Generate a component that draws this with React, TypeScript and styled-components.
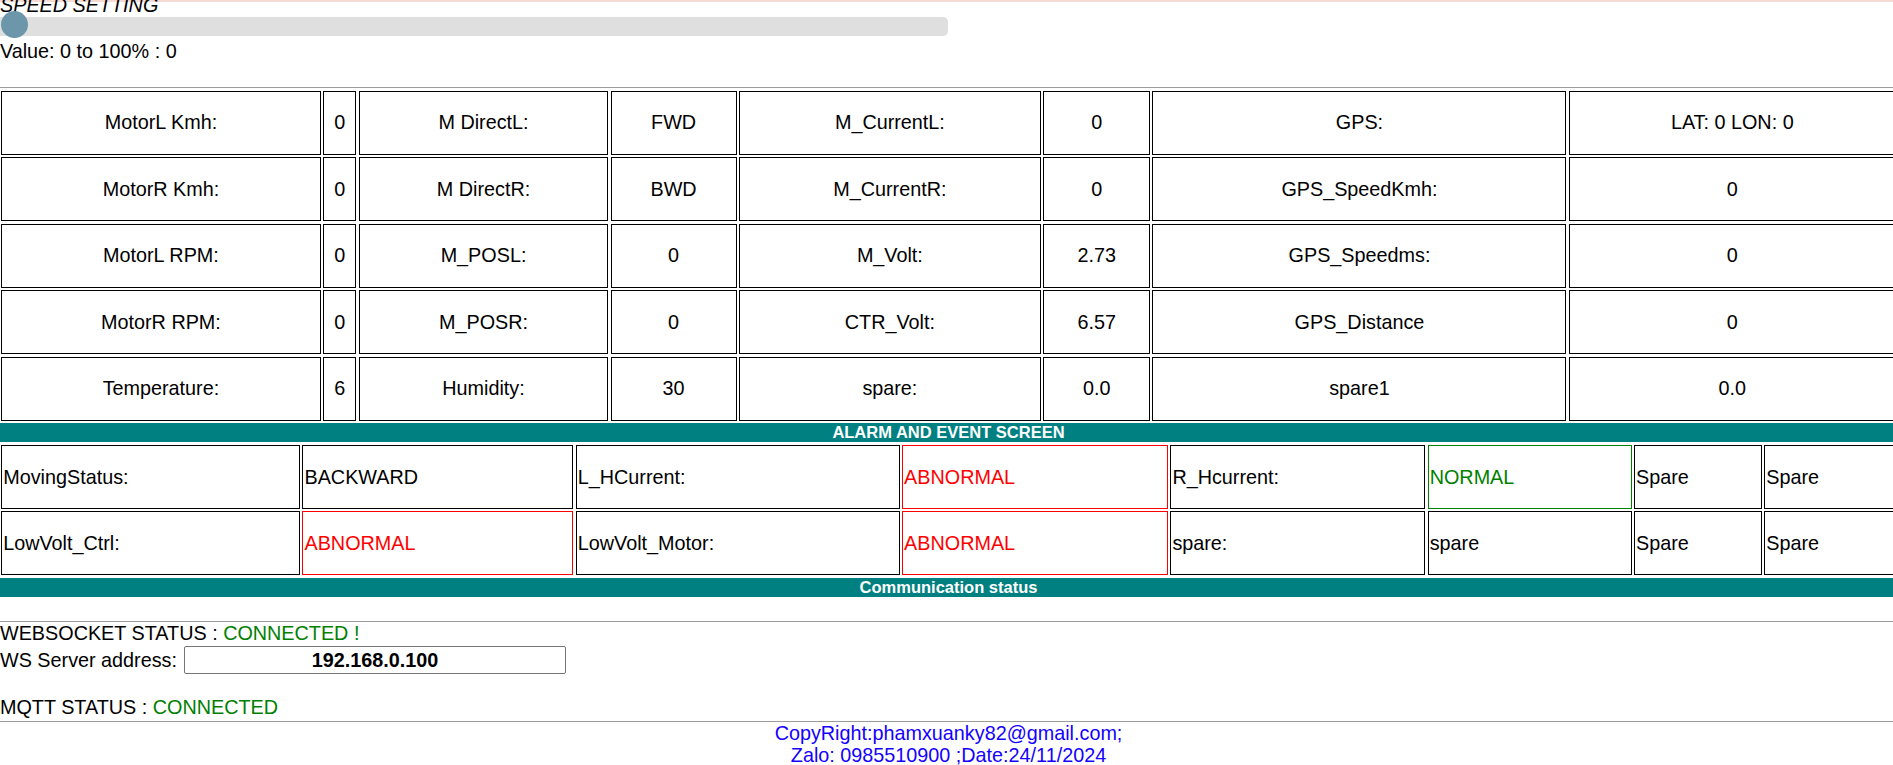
import styled, { createGlobalStyle } from 'styled-components'

const GlobalStyle = createGlobalStyle`
    html, body {
        margin: 0;
        padding: 0;
        overflow: hidden;
        background: #fff;
    }
    body {
        font-family: 'Liberation Sans', Arial, sans-serif;
        font-size: 19.8px;
        line-height: 22.6px;
        color: #000;
    }
`

const Page = styled.div`
    width: 1905px;
    border-top: 2px solid #f4dbd4;
`

const Heading = styled.div`
    margin-top: -8.5px;
    font-style: italic;
    height: 22.6px;
`

const SliderTrack = styled.div`
    position: relative;
    margin-top: 0.6px;
    width: 948px;
    height: 19px;
    background: #dfdfdf;
    border-radius: 0 5px 5px 0;
`

const SliderThumb = styled.div`
    position: absolute;
    left: 0.5px;
    top: -5.5px;
    width: 27px;
    height: 27px;
    border-radius: 50%;
    background: #6c96aa;
`

const ValueLine = styled.div`
    margin-top: 4.4px;
`

const Rule = styled.div<{ $gap: number }>`
    margin-top: ${(p) => p.$gap}px;
    height: 0;
    border-top: 1px solid #9c9c9c;
`

const DataGrid = styled.div<{ $cols: string }>`
    display: grid;
    grid-template-columns: ${(p) => p.$cols};
    grid-auto-rows: 64px;
    column-gap: 2.3px;
    row-gap: 2.5px;
    padding: 2.4px 0 2.4px 1.2px;
`

const DataCell = styled.div<{ $center?: boolean; $tone?: 'bad' | 'good' }>`
    box-sizing: border-box;
    border: 1px solid
        ${(p) =>
            p.$tone === 'bad' ? '#ff0000' : p.$tone === 'good' ? '#008000' : '#000'};
    color: ${(p) =>
        p.$tone === 'bad' ? '#ff0000' : p.$tone === 'good' ? '#008000' : '#000'};
    display: flex;
    align-items: center;
    justify-content: ${(p) => (p.$center ? 'center' : 'flex-start')};
    padding: 0 1px;
    white-space: nowrap;
    overflow: hidden;
`

const Banner = styled.div`
    width: 1897px;
    height: 19.4px;
    line-height: 19.4px;
    background: #008080;
    color: #fff;
    font-weight: bold;
    font-size: 16.5px;
    text-align: center;
`

const StatusLine = styled.div<{ $gap?: number }>`
    margin-top: ${(p) => p.$gap ?? 0}px;
`

const Ok = styled.span`
    color: #008000;
`

const AddressRow = styled.div`
    display: flex;
    align-items: center;
    gap: 7px;
    margin-top: 2.1px;
    height: 27.6px;
`

const AddressInput = styled.input`
    box-sizing: border-box;
    width: 382px;
    height: 27.6px;
    border: 1px solid #767676;
    border-radius: 2px;
    padding: 0;
    text-align: center;
    font-family: 'Liberation Sans', Arial, sans-serif;
    font-weight: bold;
    font-size: 19.8px;
    color: #000;
    background: #fff;
`

const Footer = styled.div`
    width: 1897px;
    color: #1400ff;
    text-align: center;
`

const motorRows = [
    ['MotorL Kmh:', '0', 'M DirectL:', 'FWD', 'M_CurrentL:', '0', 'GPS:', 'LAT: 0 LON: 0'],
    ['MotorR Kmh:', '0', 'M DirectR:', 'BWD', 'M_CurrentR:', '0', 'GPS_SpeedKmh:', '0'],
    ['MotorL RPM:', '0', 'M_POSL:', '0', 'M_Volt:', '2.73', 'GPS_Speedms:', '0'],
    ['MotorR RPM:', '0', 'M_POSR:', '0', 'CTR_Volt:', '6.57', 'GPS_Distance', '0'],
    ['Temperature:', '6', 'Humidity:', '30', 'spare:', '0.0', 'spare1', '0.0'],
]

type Alarm = { text: string; tone?: 'bad' | 'good' }

const alarmRows: Alarm[][] = [
    [
        { text: 'MovingStatus:' },
        { text: 'BACKWARD' },
        { text: 'L_HCurrent:' },
        { text: 'ABNORMAL', tone: 'bad' },
        { text: 'R_Hcurrent:' },
        { text: 'NORMAL', tone: 'good' },
        { text: 'Spare' },
        { text: 'Spare' },
    ],
    [
        { text: 'LowVolt_Ctrl:' },
        { text: 'ABNORMAL', tone: 'bad' },
        { text: 'LowVolt_Motor:' },
        { text: 'ABNORMAL', tone: 'bad' },
        { text: 'spare:' },
        { text: 'spare' },
        { text: 'Spare' },
        { text: 'Spare' },
    ],
]

function App() {
    return (
        <Page>
            <GlobalStyle />
            <Heading>SPEED SETTING</Heading>
            <SliderTrack>
                <SliderThumb />
            </SliderTrack>
            <ValueLine>Value: 0 to 100% : 0</ValueLine>
            <Rule $gap={24.6} />
            <DataGrid $cols="319.5px 33.5px 249.5px 126px 302px 107px 414px 327px">
                {motorRows.map((row, r) =>
                    row.map((text, c) => (
                        <DataCell key={`${r}-${c}`} $center>
                            {text}
                        </DataCell>
                    ))
                )}
            </DataGrid>
            <Banner>ALARM AND EVENT SCREEN</Banner>
            <DataGrid $cols="299px 271px 324px 266px 255px 204px 128px 136px">
                {alarmRows.map((row, r) =>
                    row.map((cell, c) => (
                        <DataCell key={`${r}-${c}`} $tone={cell.tone}>
                            {cell.text}
                        </DataCell>
                    ))
                )}
            </DataGrid>
            <Banner>Communication status</Banner>
            <Rule $gap={23.5} />
            <StatusLine>
                WEBSOCKET STATUS : <Ok>CONNECTED !</Ok>
            </StatusLine>
            <AddressRow>
                <span>WS Server address:</span>
                <AddressInput value="192.168.0.100" readOnly />
            </AddressRow>
            <StatusLine $gap={22.5}>
                MQTT STATUS : <Ok>CONNECTED</Ok>
            </StatusLine>
            <Rule $gap={1.9} />
            <Footer>
                CopyRight:phamxuanky82@gmail.com;
                <br />
                Zalo: 0985510900 ;Date:24/11/2024
            </Footer>
        </Page>
    )
}

export default App
